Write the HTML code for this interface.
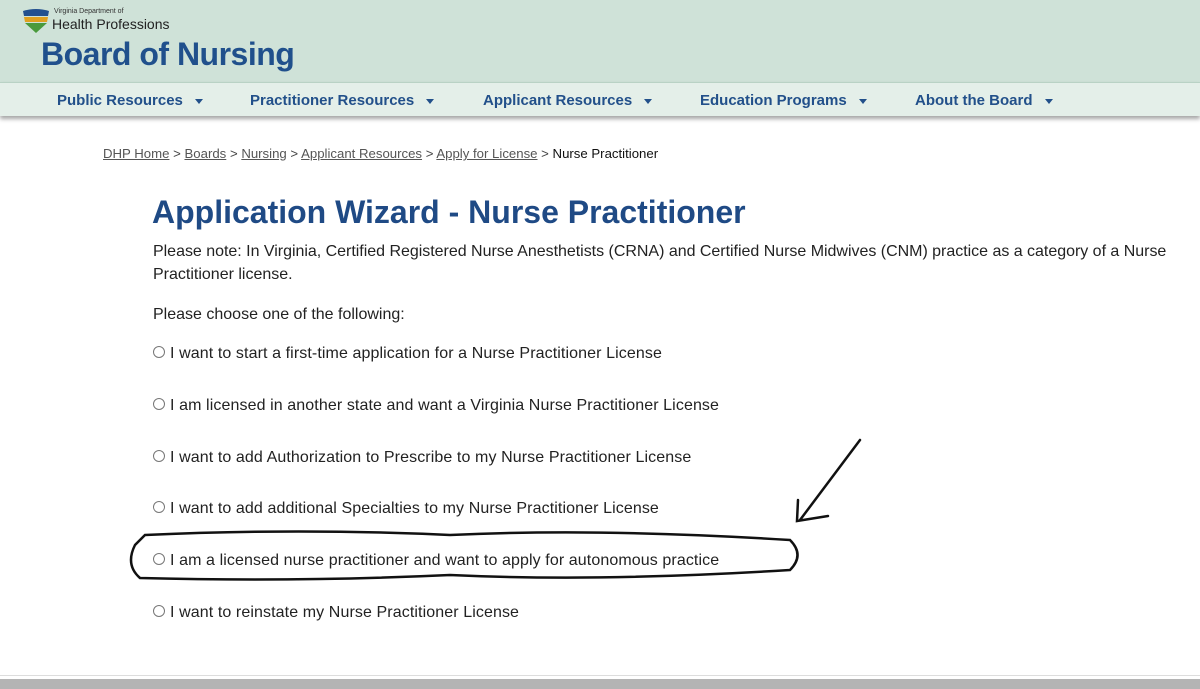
<!DOCTYPE html>
<html><head><meta charset="utf-8"><style>
body{margin:0;width:1200px;height:689px;overflow:hidden;background:#fff;font-family:"Liberation Sans",sans-serif;position:relative}
.hdr{position:absolute;left:0;top:0;width:1200px;height:82px;background:#cfe2d8}
.nav{position:absolute;left:0;top:82px;width:1200px;height:33px;background:#e4efe9;border-top:1px solid #b9d2c5;box-shadow:0 3px 4px rgba(0,0,0,.35)}
.nav span{position:absolute;top:9px;font-size:15px;font-weight:bold;color:#22508a}
.nav span:after{content:"";display:inline-block;margin-left:12px;vertical-align:middle;border-left:4px solid transparent;border-right:4px solid transparent;border-top:5px solid #22508a}
.t{position:absolute;white-space:nowrap;color:#222}
.crumb{font-size:13.2px;color:#444}
.crumb u{color:#555}
.opt{font-size:16px;letter-spacing:0.1px;color:#222}
.opt:before{content:"";display:inline-block;width:10px;height:10px;border:1px solid #777;border-radius:50%;margin-right:5px;vertical-align:0}
</style></head><body>
<div class="hdr">
<svg style="position:absolute;left:22px;top:8px" width="28" height="26" viewBox="0 0 28 26"><path d="M1 3 Q14 -1 27 3 L26 8 L2 8Z" fill="#23508f"/><path d="M2 9 L26 9 L25 14 L3 14Z" fill="#e0a020"/><path d="M3 15 L25 15 L14 25Z" fill="#4a9a3c"/></svg>
<div class="t" style="left:54px;top:8px;font-size:7px;color:#333">Virginia Department of</div>
<div class="t" style="left:52px;top:16px;font-size:14px;color:#222">Health Professions</div>
<div class="t" style="left:41px;top:36px;font-size:32px;font-weight:bold;color:#20508c;letter-spacing:-0.5px">Board of Nursing</div>
</div>
<div class="nav">
<span style="left:57px">Public Resources</span>
<span style="left:250px">Practitioner Resources</span>
<span style="left:483px">Applicant Resources</span>
<span style="left:700px">Education Programs</span>
<span style="left:915px">About the Board</span>
</div>
<div class="t crumb" style="left:103px;top:146px"><u>DHP Home</u> &gt; <u>Boards</u> &gt; <u>Nursing</u> &gt; <u>Applicant Resources</u> &gt; <u>Apply for License</u> &gt; <span style="color:#111">Nurse Practitioner</span></div>
<div class="t" style="left:152px;top:194px;font-size:32px;font-weight:bold;color:#1f4a85;letter-spacing:0">Application Wizard - Nurse Practitioner</div>
<div class="t" style="left:153px;top:243px;font-size:16px;letter-spacing:-0.02px">Please note: In Virginia, Certified Registered Nurse Anesthetists (CRNA) and Certified Nurse Midwives (CNM) practice as a category of a Nurse</div>
<div class="t" style="left:153px;top:266px;font-size:16px">Practitioner license.</div>
<div class="t" style="left:153px;top:306px;font-size:16px">Please choose one of the following:</div>
<div class="t opt" style="left:153px;top:345px">I want to start a first-time application for a Nurse Practitioner License</div>
<div class="t opt" style="left:153px;top:397px">I am licensed in another state and want a Virginia Nurse Practitioner License</div>
<div class="t opt" style="left:153px;top:449px">I want to add Authorization to Prescribe to my Nurse Practitioner License</div>
<div class="t opt" style="left:153px;top:500px">I want to add additional Specialties to my Nurse Practitioner License</div>
<div class="t opt" style="left:153px;top:552px">I am a licensed nurse practitioner and want to apply for autonomous practice</div>
<div class="t opt" style="left:153px;top:604px">I want to reinstate my Nurse Practitioner License</div>
<svg style="position:absolute;left:0;top:0" width="1200" height="689">
<path d="M860 440 L800 520 M798 500 L797 521 L828 516" stroke="#111" stroke-width="2.5" fill="none" stroke-linecap="round"/>
<path d="M145 535 Q300 528 450 535 Q600 528 790 540 Q805 555 790 570 Q600 582 450 575 Q300 582 140 578 Q125 565 135 545 Z" stroke="#111" stroke-width="2.5" fill="none"/>
</svg>
<div style="position:absolute;left:0;top:675px;width:1200px;height:1px;background:#ddd"></div>
<div style="position:absolute;left:0;top:679px;width:1200px;height:10px;background:#b4b4b4"></div>
</body></html>
